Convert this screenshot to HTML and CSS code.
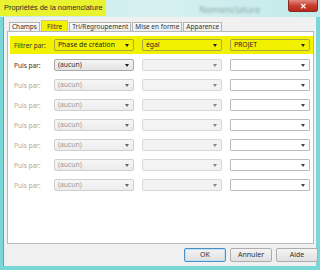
FILE: index.html
```html
<!DOCTYPE html>
<html lang="fr">
<head>
<meta charset="utf-8">
<link rel="stylesheet" href="styles.css">
</head>
<body>
<div class="window">
  <div class="titlebar">
    <span class="title">Propriétés de la nomenclature</span>
    <span class="ghost">Nomenclature</span>
    <span class="close">✕</span>
  </div>
  <div class="dialog">
    <div class="tabs">
      <span class="tab">Champs</span>
      <span class="tab active">Filtre</span>
      <span class="tab">Tri/Regroupement</span>
      <span class="tab">Mise en forme</span>
      <span class="tab">Apparence</span>
    </div>
    <div class="panel">
      <div class="row first">
        <span class="label">Filtrer par:</span>
        <div class="sel hl"><span>Phase de création</span><i></i></div>
        <div class="sel hl"><span>égal</span><i></i></div>
        <div class="sel hl"><span>PROJET</span><i></i></div>
      </div>
      <div class="row">
        <span class="label">Puis par:</span>
        <div class="sel on"><span>(aucun)</span><i></i></div>
        <div class="sel off"><span></span><i></i></div>
        <div class="sel white"><span></span><i></i></div>
      </div>
      <div class="row dis">
        <span class="label">Puis par:</span>
        <div class="sel dim"><span>(aucun)</span><i></i></div>
        <div class="sel off"><span></span><i></i></div>
        <div class="sel white"><span></span><i></i></div>
      </div>
      <div class="row dis">
        <span class="label">Puis par:</span>
        <div class="sel dim"><span>(aucun)</span><i></i></div>
        <div class="sel off"><span></span><i></i></div>
        <div class="sel white"><span></span><i></i></div>
      </div>
      <div class="row dis">
        <span class="label">Puis par:</span>
        <div class="sel dim"><span>(aucun)</span><i></i></div>
        <div class="sel off"><span></span><i></i></div>
        <div class="sel white"><span></span><i></i></div>
      </div>
      <div class="row dis">
        <span class="label">Puis par:</span>
        <div class="sel dim"><span>(aucun)</span><i></i></div>
        <div class="sel off"><span></span><i></i></div>
        <div class="sel white"><span></span><i></i></div>
      </div>
      <div class="row dis">
        <span class="label">Puis par:</span>
        <div class="sel dim"><span>(aucun)</span><i></i></div>
        <div class="sel off"><span></span><i></i></div>
        <div class="sel white"><span></span><i></i></div>
      </div>
      <div class="row dis">
        <span class="label">Puis par:</span>
        <div class="sel dim"><span>(aucun)</span><i></i></div>
        <div class="sel off"><span></span><i></i></div>
        <div class="sel white"><span></span><i></i></div>
      </div>
    </div>
    <div class="footer">
      <span class="btn focus">OK</span>
      <span class="btn">Annuler</span>
      <span class="btn">Aide</span>
    </div>
  </div>
</div>
</body>
</html>
```
FILE: styles.css
```css
html, body {
  margin: 0;
  padding: 0;
}
body {
  width: 320px;
  height: 270px;
  overflow: hidden;
  background: #78d8d8;
  font-family: "Noto Sans", "Open Sans", "Liberation Sans", sans-serif;
  color: #222;
}
.window {
  display: flex;
  flex-direction: column;
  height: 270px;
}
.titlebar {
  height: 17px;
  display: flex;
  align-items: flex-start;
  background: linear-gradient(90deg, #c6ecec 0%, #d6f0f0 50%, #c2eaea 100%);
}
.title {
  background: #e9f22e;
  height: 16px;
  padding: 0 3px 0 4px;
  font-family: "Liberation Sans", Arial, sans-serif;
  font-size: 7.4px;
  line-height: 16px;
  color: #2a2a2a;
  white-space: nowrap;
}
.ghost {
  margin-left: auto;
  margin-right: 28px;
  margin-top: 3px;
  font-size: 9px;
  color: #8fa9a9;
  filter: blur(1.2px);
}
.close {
  width: 28px;
  height: 11px;
  margin-right: 2px;
  background: linear-gradient(#e08a80, #c8402f 50%, #b8281c);
  border: 1px solid #8a2a22;
  border-top: none;
  border-radius: 0 0 3px 3px;
  color: #fff;
  font-size: 8px;
  line-height: 11px;
  text-align: center;
  font-weight: bold;
}
.dialog {
  margin: 0 4px 0 3px;
  height: 249px;
  background: #f0f0f0;
  border-left: 1px solid #5aa8a8;
  display: flex;
  flex-direction: column;
}
.tabs {
  display: flex;
  align-items: flex-end;
  padding: 3px 0 0 5px;
  height: 11px;
  gap: 1px;
}
.tab {
  height: 8px;
  padding: 0 2px;
  border: 1px solid #b4b4b4;
  border-bottom: none;
  background: linear-gradient(#fbfbfb, #ececec);
  font-size: 6.5px;
  line-height: 8px;
  color: #333;
  white-space: nowrap;
}
.tab.active {
  height: 10px;
  padding: 0 5px;
  background: #f3f300;
  border-color: #c8c8a0;
  line-height: 11px;
}
.panel {
  margin: 0 2px 0 3px;
  height: 211px;
  background: #fff;
  border: 1px solid #b8b8b8;
}
.row {
  display: grid;
  grid-template-columns: 32px 80px 80px 80px;
  column-gap: 8px;
  align-items: center;
  height: 20px;
  padding-left: 6px;
}
.row.first {
  margin: 4px 0 1px 2px;
  height: 18px;
  padding-left: 4px;
  background: #f2f200;
}
.label {
  font-size: 6.5px;
  color: #333;
  white-space: nowrap;
}
.row.dis .label {
  color: #a8a8a8;
}
.sel {
  position: relative;
  height: 10px;
  border: 1px solid #b0b0b0;
  border-radius: 2px;
  font-size: 6.8px;
  line-height: 10px;
  padding-left: 3px;
  white-space: nowrap;
  overflow: hidden;
}
.sel i {
  position: absolute;
  right: 4px;
  top: 4px;
  width: 0;
  height: 0;
  border-left: 2.5px solid transparent;
  border-right: 2.5px solid transparent;
  border-top: 3px solid #222;
}
.sel.hl {
  background: #f2f200;
  border-color: #a8a840;
  color: #222;
}
.sel.on {
  background: linear-gradient(#f4f4f4, #e4e4e4);
  border-color: #a8a8a8;
  color: #333;
}
.sel.dim {
  background: linear-gradient(#f6f6f6, #ececec);
  border-color: #cfcfcf;
  color: #9a9a9a;
}
.sel.dim i {
  border-top-color: #666;
}
.sel.off {
  background: #f3f3f3;
  border-color: #d8d8d8;
}
.sel.off i {
  border-top-color: #888;
}
.sel.white {
  background: #fff;
  border-color: #bcbcbc;
  border-radius: 1px;
}
.sel.white i {
  border-top-color: #444;
}
.footer {
  display: flex;
  justify-content: flex-end;
  gap: 4px;
  padding: 4px 0 0 0;
  margin-right: -2px;
}
.btn {
  width: 40px;
  height: 12px;
  border: 1px solid #adadad;
  border-radius: 2px;
  background: linear-gradient(#f4f4f4, #e0e0e0);
  font-size: 7px;
  line-height: 12px;
  text-align: center;
  color: #333;
}
.btn.focus {
  border-color: #4a90c8;
  box-shadow: inset 0 0 0 1px #c4e0f4;
}
```
